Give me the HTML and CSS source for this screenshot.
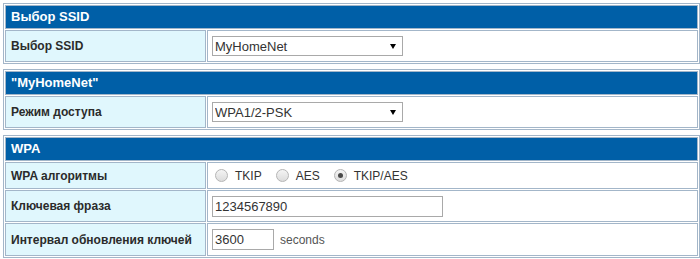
FILE: index.html
```html
<!DOCTYPE html>
<html lang="ru">

<head>
  <meta charset="UTF-8">
  <meta name="viewport" content="width=device-width, initial-scale=1.0">
  <title>WLAN</title>
  <link rel="stylesheet" href="styles.css">
</head>

<body>
  <div class="page">
    <!-- выбор сети -->
    <div class="panel">
      <div class="panel-head">Выбор SSID</div>
      <div class="row">
        <div class="cell-label">Выбор SSID</div>
        <div class="cell-value">
          <span class="select-wrap">
            <select class="select">
              <option>MyHomeNet</option>
            </select>
          </span>
        </div>
      </div>
    </div>

    <div class="panel">
      <div class="panel-head">"MyHomeNet"</div>
      <div class="row">
        <div class="cell-label">Режим доступа</div>
        <div class="cell-value">
          <span class="select-wrap">
            <select class="select">
              <option>WPA1/2-PSK</option>
            </select>
          </span>
        </div>
      </div>
    </div>

    <!-- настройки WPA -->
    <div class="panel">
      <div class="panel-head">WPA</div>
      <div class="row row--radio">
        <div class="cell-label">WPA алгоритмы</div>
        <div class="cell-value">
          <label class="opt"><input type="radio" name="cipher" class="radio"><span>TKIP</span></label>
          <label class="opt"><input type="radio" name="cipher" class="radio"><span>AES</span></label>
          <label class="opt"><input type="radio" name="cipher" class="radio" checked><span>TKIP/AES</span></label>
        </div>
      </div>
      <div class="row row--key">
        <div class="cell-label">Ключевая фраза</div>
        <div class="cell-value">
          <input type="text" class="text-input text-input--long" value="1234567890">
        </div>
      </div>
      <div class="row row--interval">
        <div class="cell-label">Интервал обновления ключей</div>
        <div class="cell-value">
          <input type="text" class="text-input text-input--short" value="3600">
          <span class="unit">seconds</span>
        </div>
      </div>
    </div>
  </div>
</body>

</html>
```

FILE: styles.css
```css
body {
  margin: 0;
  background: #fff;
  font-family: "Liberation Sans", Arial, sans-serif;
  color: #333;
}

.page {
  padding: 3px 0 0 3px;
}

.panel {
  display: flex;
  flex-direction: column;
  gap: 1px;
  padding: 1px;
  border: 1px solid #a3b6c9;
  margin-bottom: 5px;
}

.panel-head {
  height: 24px;
  box-sizing: border-box;
  border: 1px solid #a3b6c9;
  background-color: #005fa7;
  color: #fff;
  font-size: 13px;
  font-weight: bold;
  line-height: 22px;
  padding-left: 5px;
}

.row {
  display: grid;
  grid-template-columns: 201px 1fr;
  gap: 1px;
  height: 32px;
}

.row--radio {
  height: 27px;
}

.row--key {
  height: 32px;
}

.row--interval {
  height: 33px;
}

.cell-label,
.cell-value {
  box-sizing: border-box;
  border: 1px solid #a3b6c9;
  display: flex;
  align-items: center;
}

.cell-label {
  background-color: #e0f7fd;
  padding-left: 5px;
  font-size: 12px;
  font-weight: bold;
  color: #2b2b2b;
}

.cell-value {
  padding-left: 4px;
  font-size: 13px;
}

.select-wrap {
  position: relative;
  display: inline-block;
}

.select-wrap::after {
  content: "";
  position: absolute;
  right: 7px;
  top: 8px;
  border-left: 3px solid transparent;
  border-right: 3px solid transparent;
  border-top: 5px solid #000;
  pointer-events: none;
}

.select {
  -webkit-appearance: none;
  appearance: none;
  display: block;
  width: 191px;
  height: 20px;
  box-sizing: border-box;
  margin: 0;
  padding: 0 0 0 2px;
  border: 1px solid #a9a9a9;
  border-radius: 0;
  background: #fff;
  font-family: inherit;
  font-size: 13px;
  color: #333;
  outline: 0;
}

.opt {
  display: flex;
  align-items: center;
  margin-left: 14px;
  font-size: 12px;
}

.opt:first-child {
  margin-left: 3px;
}

.radio {
  -webkit-appearance: none;
  appearance: none;
  width: 13px;
  height: 13px;
  margin: 0 7px 0 0;
  box-sizing: border-box;
  border: 1px solid #b5b5b5;
  border-radius: 50%;
  background: linear-gradient(#f4f4f4, #dcdcdc);
  position: relative;
}

.radio:checked::after {
  content: "";
  position: absolute;
  left: 3px;
  top: 3px;
  width: 5px;
  height: 5px;
  border-radius: 50%;
  background: #4a4a4a;
}

.text-input {
  height: 21px;
  box-sizing: border-box;
  margin: 0;
  padding: 0 2px;
  border: 1px solid #a9a9a9;
  font-family: inherit;
  font-size: 13px;
  color: #333;
  outline: 0;
}

.text-input--long {
  width: 231px;
}

.text-input--short {
  width: 62px;
}

.unit {
  margin-left: 6px;
  font-size: 12px;
  color: #555;
}
```
